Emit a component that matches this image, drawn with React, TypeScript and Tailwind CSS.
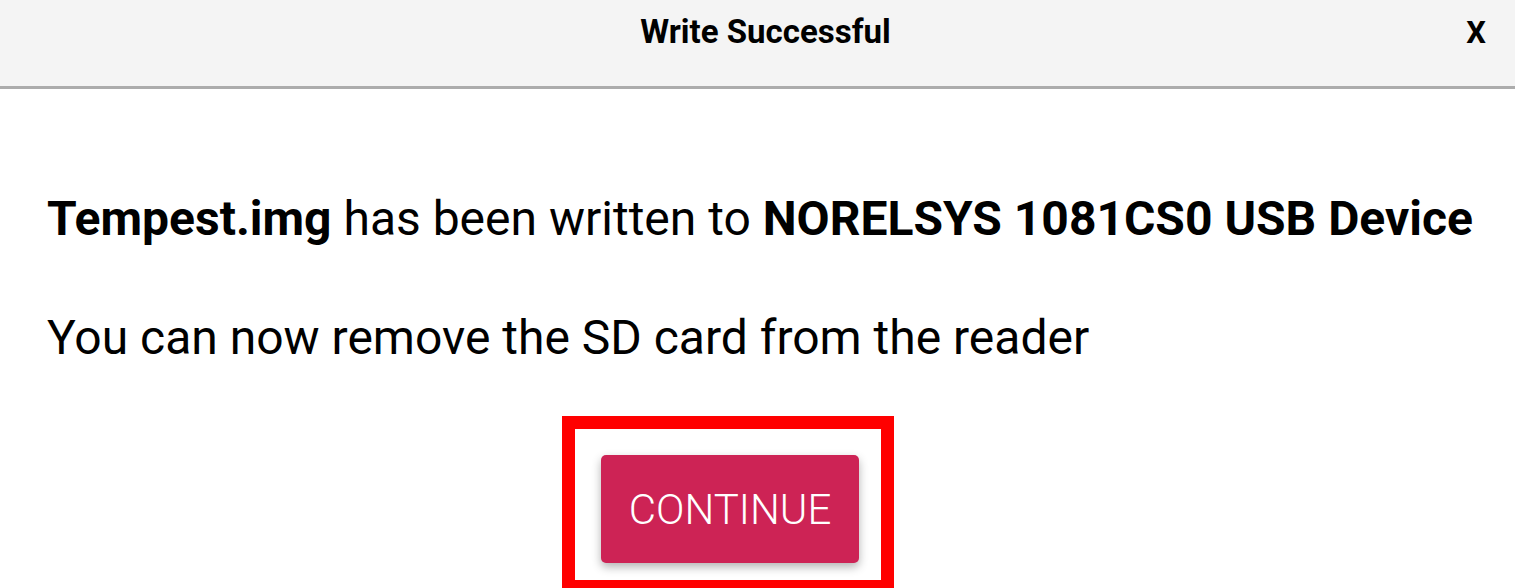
import React from 'react';

const App = () => {
  return (
    <div className="w-[1515px] h-[588px] overflow-hidden bg-white font-['Roboto',sans-serif] text-black">
      {/* Title bar */}
      <div className="h-[89px] bg-[#f4f4f4] border-b-[3px] border-[#acacac] flex items-center relative">
        <div className="flex-1 text-center text-[33px] font-bold pb-[22px] pl-[16px]">Write Successful</div>
        <button className="absolute right-[29px] top-[10px] text-[31px] font-bold">X</button>
      </div>

      {/* Body */}
      <div className="px-[47px] pt-[102px]">
        <p className="text-[48px] leading-[56px] whitespace-nowrap">
          <span className="font-bold">Tempest.img</span> has been written to{' '}
          <span className="font-bold">NORELSYS 1081CS0 USB Device</span>
        </p>
        <p className="text-[48px] leading-[56px] mt-[63px] whitespace-nowrap">You can now remove the SD card from the reader</p>

        <div className="flex justify-center mt-[50px] pr-[59px]">
          <div className="border-[13px] border-[#ff0000] pl-[26px] pr-[22px] pt-[26px] pb-[17px]">
            <button className="w-[258px] h-[108px] rounded-[5px] bg-[#cd2355] text-white text-[42px] font-light shadow-[0_4px_10px_rgba(0,0,0,0.3)]">
              CONTINUE
            </button>
          </div>
        </div>
      </div>
    </div>
  );
};

export default App;
